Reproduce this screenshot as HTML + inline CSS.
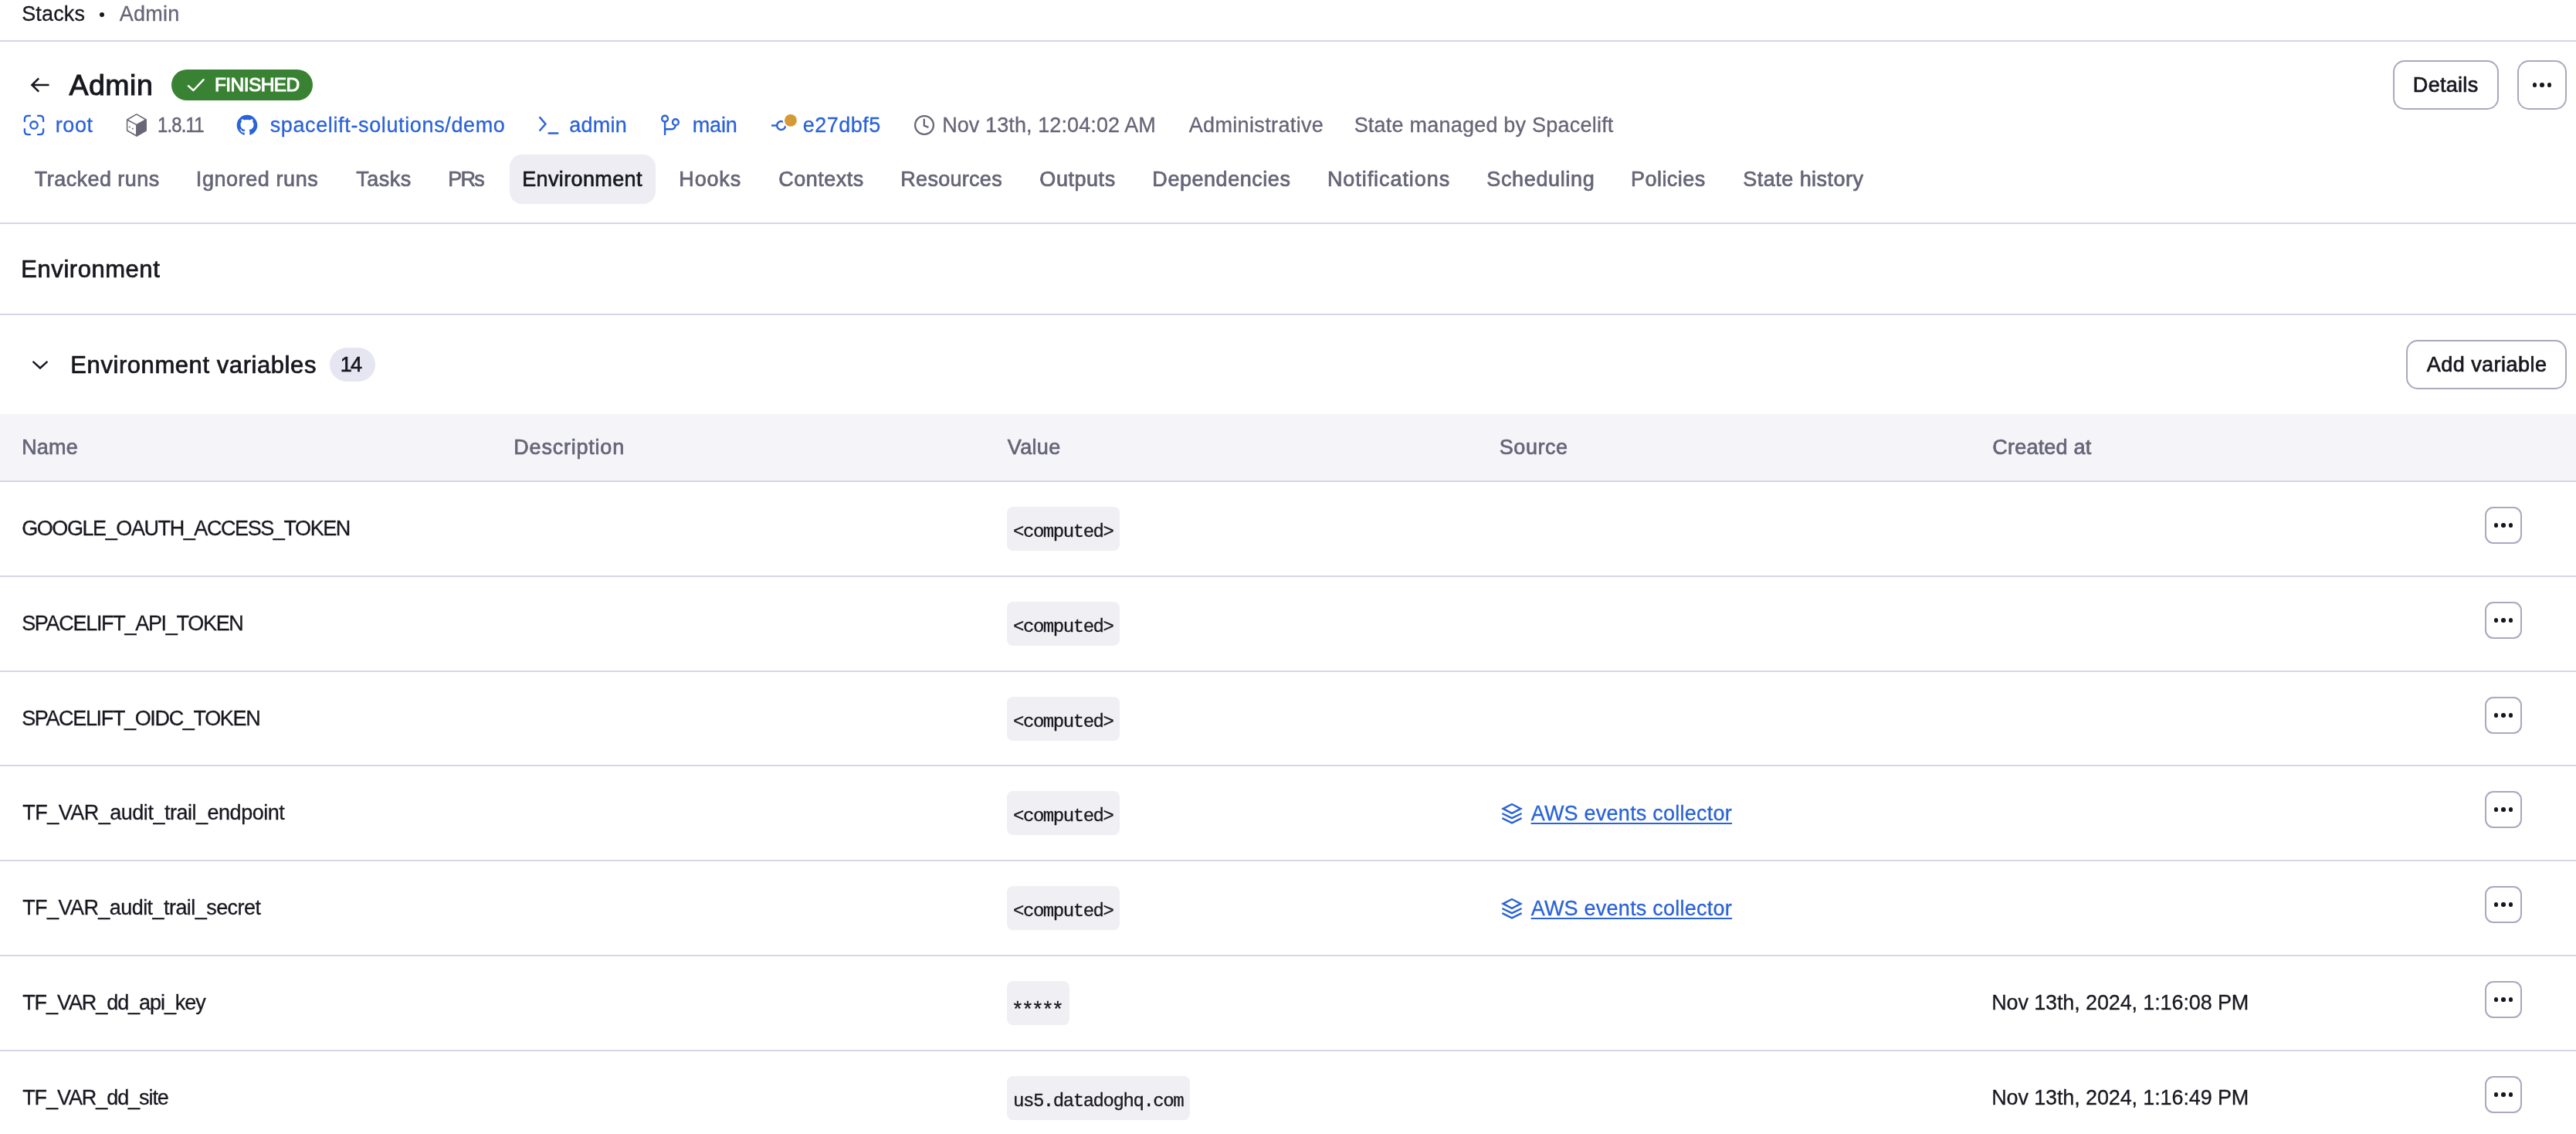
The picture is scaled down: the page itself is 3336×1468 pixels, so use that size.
<!DOCTYPE html><html lang="en"><head><meta charset="utf-8"><title>Admin · Environment</title>
<style>
*{box-sizing:border-box;margin:0;padding:0}
html,body{width:3336px;height:1468px;overflow:hidden;background:#fff}
body{position:relative;font-family:"Liberation Sans", sans-serif;color:#17171f;-webkit-font-smoothing:antialiased}
.t{position:absolute;white-space:nowrap;font-weight:400;font-style:normal;margin:0;display:block}
a.t{text-decoration:none;cursor:pointer}
.ico{position:absolute;overflow:visible;display:block}
.hr{position:absolute;left:0;width:3336px;height:2px;background:#d6d6e6}
#app{position:absolute;left:0;top:0;width:3336px;height:1468px;overflow:hidden;will-change:transform;background:#fff}
.badge{position:absolute;left:222px;top:90px;width:183px;height:40px;border-radius:20px;background:#3a8233}
.btn{position:absolute;border:2px solid #a9a9bf;background:#fff;border-radius:15px}
.btn.sm{border-radius:11px}
.d{position:absolute;border-radius:50%;background:#17171f;display:block}
.tab-active{position:absolute;left:660px;top:200px;width:189.4px;height:64px;border-radius:16px;background:#ededf3}
.count{position:absolute;left:426.75px;top:450px;width:59px;height:44px;border-radius:22px;background:#e6e6f2}
.thead{position:absolute;left:0;top:536px;width:3336px;height:86px;background:#f4f4f9}
.pill{position:absolute;left:1304px;height:57px;border-radius:8px;background:#f0f0f4;font-family:"Liberation Mono", monospace;font-size:24px;letter-spacing:-1.45px;line-height:66.1px;-webkit-text-stroke:0.3px #17171f;padding:0 0 0 8px;overflow:hidden;white-space:pre;color:#17171f}
.sep{position:absolute;left:128.7px;top:15.7px;width:6.6px;height:6.6px;border-radius:50%;background:#17171f}
</style></head><body><div id="app">
<nav class="crumbs"><a class="t crumb" style="left:28.15px;top:1.70px;font-size:27px;line-height:32px;letter-spacing:0.155px;color:#17171f;-webkit-text-stroke:0.3px #17171f;">Stacks</a><span class="sep"></span><span class="t crumb" style="left:154.85px;top:1.70px;font-size:27px;line-height:32px;letter-spacing:0.246px;color:#656577;-webkit-text-stroke:0.3px #656577;">Admin</span></nav>
<div class="hr" style="top:52px"></div>
<header>
<svg class="ico" style="left:36px;top:94px" width="32" height="32" viewBox="0 0 32 32" aria-hidden="true"><path d="M27.5 16H6 M14.2 7.3 L5.4 16 L14.2 24.7" fill="none" stroke="#17171f" stroke-width="2.5" stroke-linejoin="miter"/></svg><h1 class="t" style="left:89.50px;top:88.40px;font-size:37.5px;line-height:45px;letter-spacing:0.491px;color:#17171f;-webkit-text-stroke:1.0px #17171f;">Admin</h1>
<div class="badge"></div><svg class="ico" style="left:238px;top:94px" width="32" height="32" viewBox="0 0 32 32" aria-hidden="true"><path d="M5.9 17.2 L12.4 23 L25.6 9.2" fill="none" stroke="#fff" stroke-width="2.4" stroke-linecap="round" stroke-linejoin="round"/></svg><span class="t badge-t" style="left:278.00px;top:94.70px;font-size:24.5px;line-height:29px;letter-spacing:-0.593px;color:#ffffff;-webkit-text-stroke:1.0px #ffffff;">FINISHED</span>
<div class="btn" style="left:3099px;top:78px;width:137px;height:64px"></div><span class="t" style="left:3124.85px;top:94.00px;font-size:27px;line-height:32px;letter-spacing:0.295px;color:#17171f;-webkit-text-stroke:0.7px #17171f;">Details</span>
<div class="btn" style="left:3260px;top:78px;width:64px;height:64px"></div><i class="d" style="left:3279.55px;top:107.05px;width:5.5px;height:5.5px"></i><i class="d" style="left:3289.25px;top:107.05px;width:5.5px;height:5.5px"></i><i class="d" style="left:3298.95px;top:107.05px;width:5.5px;height:5.5px"></i>
<div class="meta"><svg class="ico" style="left:28px;top:146px" width="32" height="32" viewBox="0 0 32 32" aria-hidden="true"><path d="M3.9 10.9 V8.3 Q3.9 3.9 8.3 3.9 H10.9 M21.1 3.9 H23.700000000000003 Q28.1 3.9 28.1 8.3 V10.9 M28.1 21.1 V23.700000000000003 Q28.1 28.1 23.700000000000003 28.1 H21.1 M10.9 28.1 H8.3 Q3.9 28.1 3.9 23.700000000000003 V21.1" fill="none" stroke="#2a62d8" stroke-width="2.35" stroke-linecap="round"/><circle cx="16" cy="15.9" r="4.7" fill="none" stroke="#2a62d8" stroke-width="2.35"/></svg><a class="t" style="left:71.65px;top:145.60px;font-size:27px;line-height:32px;letter-spacing:0.642px;color:#2a62d8;-webkit-text-stroke:0.3px #2a62d8;">root</a><svg class="ico" style="left:161px;top:146px" width="32" height="32" viewBox="0 0 32 32" aria-hidden="true"><path d="M16.0 15.6 L28.2 9.0 L28.2 23.0 L16.0 30.0 Z" fill="#676778" stroke="#676778" stroke-width="1.5" stroke-linejoin="round"/><path d="M15.8 1.9 L28.2 9.0 L16.0 15.6 L3.6 9.0 Z M3.6 9.0 L3.6 23.0 L16.0 30.0 L16.0 15.6" fill="none" stroke="#676778" stroke-width="1.5" stroke-linejoin="round"/><path d="M6.0 18.0 L7.6 18.9 M10.0 20.2 L11.6 21.1" fill="none" stroke="#676778" stroke-width="1.5"/></svg><span class="t" style="left:203.96px;top:145.60px;font-size:27px;line-height:32px;letter-spacing:-0.900px;color:#656577;-webkit-text-stroke:0.5px #656577;transform:scaleX(0.8819);transform-origin:0 50%;">1.8.11</span><svg class="ico" style="left:303.9px;top:146px" width="32" height="32" viewBox="0 0 24 24" aria-hidden="true"><path d="M12.001 2C6.47598 2 2.00098 6.475 2.00098 12C2.00098 16.425 4.86348 20.1625 8.83848 21.4875C9.33848 21.575 9.52598 21.275 9.52598 21.0125C9.52598 20.775 9.51348 19.9875 9.51348 19.15C7.00098 19.6125 6.35098 18.5375 6.15098 17.975C6.03848 17.6875 5.55098 16.8 5.12598 16.5625C4.77598 16.375 4.27598 15.9125 5.11348 15.9C5.90098 15.8875 6.46348 16.625 6.65098 16.925C7.55098 18.4375 8.98848 18.0125 9.56348 17.75C9.65098 17.1 9.91348 16.6625 10.201 16.4125C7.97598 16.1625 5.65098 15.3 5.65098 11.475C5.65098 10.3875 6.03848 9.4875 6.67598 8.7875C6.57598 8.5375 6.22598 7.5125 6.77598 6.1375C6.77598 6.1375 7.61348 5.875 9.52598 7.1625C10.326 6.9375 11.176 6.825 12.026 6.825C12.876 6.825 13.726 6.9375 14.526 7.1625C16.4385 5.8625 17.276 6.1375 17.276 6.1375C17.826 7.5125 17.476 8.5375 17.376 8.7875C18.0135 9.4875 18.401 10.375 18.401 11.475C18.401 15.3125 16.0635 16.1625 13.8385 16.4125C14.201 16.725 14.5135 17.325 14.5135 18.2625C14.5135 19.6 14.501 20.675 14.501 21.0125C14.501 21.275 14.6885 21.5875 15.1885 21.4875C19.259 20.1133 21.9999 16.2963 22.001 12C22.001 6.475 17.526 2 12.001 2Z" fill="#2a62d8"/></svg><a class="t" style="left:349.65px;top:145.60px;font-size:27px;line-height:32px;letter-spacing:0.634px;color:#2a62d8;-webkit-text-stroke:0.3px #2a62d8;">spacelift-solutions/demo</a><svg class="ico" style="left:693.5px;top:146px" width="32" height="32" viewBox="0 0 32 32" aria-hidden="true"><path d="M4.6 5.4 L12.5 14.5 L4.6 23.5" fill="none" stroke="#2a62d8" stroke-width="2.4" stroke-linejoin="miter"/><path d="M16.7 26.5 H28.2" fill="none" stroke="#2a62d8" stroke-width="2.6" stroke-linecap="round"/></svg><a class="t" style="left:737.15px;top:145.60px;font-size:27px;line-height:32px;letter-spacing:0.295px;color:#2a62d8;-webkit-text-stroke:0.3px #2a62d8;">admin</a><svg class="ico" style="left:852px;top:146px" width="32" height="32" viewBox="0 0 32 32" aria-hidden="true"><circle cx="9.1" cy="7.6" r="3.9" fill="none" stroke="#2a62d8" stroke-width="2.4"/><circle cx="22.9" cy="12.2" r="3.9" fill="none" stroke="#2a62d8" stroke-width="2.4"/><path d="M9.1 11.5 V29.0 M9.1 21.3 H16.5 Q22.6 21.3 22.6 16.2" fill="none" stroke="#2a62d8" stroke-width="2.4"/></svg><a class="t" style="left:896.65px;top:145.60px;font-size:27px;line-height:32px;letter-spacing:-0.102px;color:#2a62d8;-webkit-text-stroke:0.3px #2a62d8;">main</a><svg class="ico" style="left:996px;top:146px" width="40" height="32" viewBox="0 0 40 32" aria-hidden="true"><path d="M3.0 16.5 H10.2" fill="none" stroke="#2a62d8" stroke-width="2.4"/><circle cx="15.7" cy="16.5" r="5.5" fill="none" stroke="#2a62d8" stroke-width="2.4"/><circle cx="27.9" cy="9.9" r="10.2" fill="#fff"/><circle cx="27.9" cy="9.9" r="7.9" fill="#d59a36"/></svg><a class="t" style="left:1039.65px;top:145.60px;font-size:27px;line-height:32px;letter-spacing:0.520px;color:#2a62d8;-webkit-text-stroke:0.3px #2a62d8;">e27dbf5</a><svg class="ico" style="left:1181px;top:146px" width="32" height="32" viewBox="0 0 32 32" aria-hidden="true"><circle cx="16" cy="16" r="11.9" fill="none" stroke="#676778" stroke-width="2.3"/><path d="M15.8 7.8 V16.6 L21.5 18.9" fill="none" stroke="#676778" stroke-width="2.3" stroke-linejoin="miter"/></svg><span class="t" style="left:1220.15px;top:145.60px;font-size:27px;line-height:32px;letter-spacing:0.101px;color:#656577;-webkit-text-stroke:0.3px #656577;">Nov 13th, 12:04:02 AM</span><span class="t" style="left:1539.65px;top:145.60px;font-size:27px;line-height:32px;letter-spacing:0.359px;color:#656577;-webkit-text-stroke:0.3px #656577;">Administrative</span><span class="t" style="left:1753.65px;top:145.60px;font-size:27px;line-height:32px;letter-spacing:0.220px;color:#656577;-webkit-text-stroke:0.3px #656577;">State managed by Spacelift</span></div>
<nav class="tabs"><div class="tab-active"></div><a class="t tab" style="left:44.85px;top:215.80px;font-size:27px;line-height:32px;letter-spacing:0.431px;color:#656577;-webkit-text-stroke:0.7px #656577;">Tracked runs</a><a class="t tab" style="left:253.85px;top:215.80px;font-size:27px;line-height:32px;letter-spacing:0.573px;color:#656577;-webkit-text-stroke:0.7px #656577;">Ignored runs</a><a class="t tab" style="left:461.35px;top:215.80px;font-size:27px;line-height:32px;letter-spacing:0.446px;color:#656577;-webkit-text-stroke:0.7px #656577;">Tasks</a><a class="t tab" style="left:580.35px;top:215.80px;font-size:27px;line-height:32px;letter-spacing:-1.854px;color:#656577;-webkit-text-stroke:0.7px #656577;">PRs</a><a class="t tab" style="left:676.15px;top:215.80px;font-size:27px;line-height:32px;letter-spacing:0.373px;color:#17171f;-webkit-text-stroke:0.7px #17171f;">Environment</a><a class="t tab" style="left:879.35px;top:215.80px;font-size:27px;line-height:32px;letter-spacing:0.817px;color:#656577;-webkit-text-stroke:0.7px #656577;">Hooks</a><a class="t tab" style="left:1008.35px;top:215.80px;font-size:27px;line-height:32px;letter-spacing:0.464px;color:#656577;-webkit-text-stroke:0.7px #656577;">Contexts</a><a class="t tab" style="left:1166.35px;top:215.80px;font-size:27px;line-height:32px;letter-spacing:0.281px;color:#656577;-webkit-text-stroke:0.7px #656577;">Resources</a><a class="t tab" style="left:1346.35px;top:215.80px;font-size:27px;line-height:32px;letter-spacing:0.541px;color:#656577;-webkit-text-stroke:0.7px #656577;">Outputs</a><a class="t tab" style="left:1492.35px;top:215.80px;font-size:27px;line-height:32px;letter-spacing:0.539px;color:#656577;-webkit-text-stroke:0.7px #656577;">Dependencies</a><a class="t tab" style="left:1718.95px;top:215.80px;font-size:27px;line-height:32px;letter-spacing:0.928px;color:#656577;-webkit-text-stroke:0.7px #656577;">Notifications</a><a class="t tab" style="left:1925.35px;top:215.80px;font-size:27px;line-height:32px;letter-spacing:0.635px;color:#656577;-webkit-text-stroke:0.7px #656577;">Scheduling</a><a class="t tab" style="left:2112.10px;top:215.80px;font-size:27px;line-height:32px;letter-spacing:0.430px;color:#656577;-webkit-text-stroke:0.7px #656577;">Policies</a><a class="t tab" style="left:2257.35px;top:215.80px;font-size:27px;line-height:32px;letter-spacing:0.457px;color:#656577;-webkit-text-stroke:0.7px #656577;">State history</a></nav>
</header>
<div class="hr" style="top:288px"></div>
<section class="page-title"><h2 class="t" style="left:27.35px;top:329.75px;font-size:31px;line-height:37px;letter-spacing:0.539px;color:#17171f;-webkit-text-stroke:0.7px #17171f;">Environment</h2></section>
<div class="hr" style="top:406px"></div>
<section class="envvars">
<svg class="ico" style="left:36px;top:457px" width="32" height="32" viewBox="0 0 32 32" aria-hidden="true"><path d="M6.55 10.85 L16 19.5 L25.45 10.85" fill="none" stroke="#17171f" stroke-width="2.4" stroke-linejoin="miter"/></svg><h3 class="t" style="left:91.35px;top:453.50px;font-size:31px;line-height:37px;letter-spacing:0.567px;color:#17171f;-webkit-text-stroke:0.7px #17171f;">Environment variables</h3><div class="count"></div><span class="t" style="left:440.85px;top:456.25px;font-size:27px;line-height:32px;letter-spacing:-1.966px;color:#17171f;-webkit-text-stroke:0.7px #17171f;">14</span>
<div class="btn" style="left:3116px;top:440px;width:208px;height:64px"></div><span class="t" style="left:3142.75px;top:456.20px;font-size:27px;line-height:32px;letter-spacing:0.466px;color:#17171f;-webkit-text-stroke:0.7px #17171f;">Add variable</span>
<div class="thead"></div><span class="t th" style="left:28.15px;top:562.50px;font-size:27px;line-height:32px;letter-spacing:0.165px;color:#656577;-webkit-text-stroke:0.7px #656577;">Name</span><span class="t th" style="left:665.35px;top:562.50px;font-size:27px;line-height:32px;letter-spacing:0.776px;color:#656577;-webkit-text-stroke:0.7px #656577;">Description</span><span class="t th" style="left:1304.85px;top:562.50px;font-size:27px;line-height:32px;letter-spacing:0.316px;color:#656577;-webkit-text-stroke:0.7px #656577;">Value</span><span class="t th" style="left:1941.85px;top:562.50px;font-size:27px;line-height:32px;letter-spacing:0.504px;color:#656577;-webkit-text-stroke:0.7px #656577;">Source</span><span class="t th" style="left:2580.35px;top:562.50px;font-size:27px;line-height:32px;letter-spacing:0.192px;color:#656577;-webkit-text-stroke:0.7px #656577;">Created at</span>
<div class="hr" style="top:622px"></div>
<div class="row">
<span class="t td-name" style="left:28.15px;top:668.00px;font-size:27px;line-height:32px;letter-spacing:-1.414px;color:#17171f;-webkit-text-stroke:0.3px #17171f;">GOOGLE_OAUTH_ACCESS_TOKEN</span>
<code class="pill" style="top:656.00px;width:146px">&lt;computed&gt;</code>
<div class="btn sm" style="left:3218px;top:656.00px;width:48px;height:48px"></div><i class="d" style="left:3229.85px;top:677.25px;width:5.5px;height:5.5px"></i><i class="d" style="left:3239.25px;top:677.25px;width:5.5px;height:5.5px"></i><i class="d" style="left:3248.65px;top:677.25px;width:5.5px;height:5.5px"></i>
</div>
<div class="row">
<div class="hr" style="top:745.00px"></div>
<span class="t td-name" style="left:28.15px;top:791.00px;font-size:27px;line-height:32px;letter-spacing:-1.300px;color:#17171f;-webkit-text-stroke:0.3px #17171f;">SPACELIFT_API_TOKEN</span>
<code class="pill" style="top:779.00px;width:146px">&lt;computed&gt;</code>
<div class="btn sm" style="left:3218px;top:779.00px;width:48px;height:48px"></div><i class="d" style="left:3229.85px;top:800.25px;width:5.5px;height:5.5px"></i><i class="d" style="left:3239.25px;top:800.25px;width:5.5px;height:5.5px"></i><i class="d" style="left:3248.65px;top:800.25px;width:5.5px;height:5.5px"></i>
</div>
<div class="row">
<div class="hr" style="top:868.00px"></div>
<span class="t td-name" style="left:28.15px;top:914.00px;font-size:27px;line-height:32px;letter-spacing:-1.347px;color:#17171f;-webkit-text-stroke:0.3px #17171f;">SPACELIFT_OIDC_TOKEN</span>
<code class="pill" style="top:902.00px;width:146px">&lt;computed&gt;</code>
<div class="btn sm" style="left:3218px;top:902.00px;width:48px;height:48px"></div><i class="d" style="left:3229.85px;top:923.25px;width:5.5px;height:5.5px"></i><i class="d" style="left:3239.25px;top:923.25px;width:5.5px;height:5.5px"></i><i class="d" style="left:3248.65px;top:923.25px;width:5.5px;height:5.5px"></i>
</div>
<div class="row">
<div class="hr" style="top:990.00px"></div>
<span class="t td-name" style="left:29.15px;top:1036.00px;font-size:27px;line-height:32px;letter-spacing:-0.485px;color:#17171f;-webkit-text-stroke:0.3px #17171f;">TF_VAR_audit_trail_endpoint</span>
<code class="pill" style="top:1024.00px;width:146px">&lt;computed&gt;</code>
<svg class="ico" style="left:1942px;top:1037px" width="32" height="32" viewBox="0 0 32 32" aria-hidden="true"><path d="M4.6 9.9 L16.0 4.0 L27.4 9.9 L16.0 15.8 Z" fill="none" stroke="#2a62d8" stroke-width="2.4" stroke-linejoin="miter"/><path d="M3.4 16.0 L16.0 22.2 L28.6 16.0 M3.4 22.2 L16.0 28.3 L28.6 22.2" fill="none" stroke="#2a62d8" stroke-width="2.4" stroke-linejoin="miter"/></svg>
<a class="t link" style="left:1982.65px;top:1037.00px;font-size:27px;line-height:32px;letter-spacing:0.242px;color:#2a62d8;-webkit-text-stroke:0.3px #2a62d8;text-decoration:underline;text-decoration-thickness:2px;text-underline-offset:2.5px;">AWS events collector</a>
<div class="btn sm" style="left:3218px;top:1024.00px;width:48px;height:48px"></div><i class="d" style="left:3229.85px;top:1045.25px;width:5.5px;height:5.5px"></i><i class="d" style="left:3239.25px;top:1045.25px;width:5.5px;height:5.5px"></i><i class="d" style="left:3248.65px;top:1045.25px;width:5.5px;height:5.5px"></i>
</div>
<div class="row">
<div class="hr" style="top:1113.00px"></div>
<span class="t td-name" style="left:29.15px;top:1159.00px;font-size:27px;line-height:32px;letter-spacing:-0.556px;color:#17171f;-webkit-text-stroke:0.3px #17171f;">TF_VAR_audit_trail_secret</span>
<code class="pill" style="top:1147.00px;width:146px">&lt;computed&gt;</code>
<svg class="ico" style="left:1942px;top:1160px" width="32" height="32" viewBox="0 0 32 32" aria-hidden="true"><path d="M4.6 9.9 L16.0 4.0 L27.4 9.9 L16.0 15.8 Z" fill="none" stroke="#2a62d8" stroke-width="2.4" stroke-linejoin="miter"/><path d="M3.4 16.0 L16.0 22.2 L28.6 16.0 M3.4 22.2 L16.0 28.3 L28.6 22.2" fill="none" stroke="#2a62d8" stroke-width="2.4" stroke-linejoin="miter"/></svg>
<a class="t link" style="left:1982.65px;top:1160.00px;font-size:27px;line-height:32px;letter-spacing:0.242px;color:#2a62d8;-webkit-text-stroke:0.3px #2a62d8;text-decoration:underline;text-decoration-thickness:2px;text-underline-offset:2.5px;">AWS events collector</a>
<div class="btn sm" style="left:3218px;top:1147.00px;width:48px;height:48px"></div><i class="d" style="left:3229.85px;top:1168.25px;width:5.5px;height:5.5px"></i><i class="d" style="left:3239.25px;top:1168.25px;width:5.5px;height:5.5px"></i><i class="d" style="left:3248.65px;top:1168.25px;width:5.5px;height:5.5px"></i>
</div>
<div class="row">
<div class="hr" style="top:1236.00px"></div>
<span class="t td-name" style="left:29.15px;top:1282.00px;font-size:27px;line-height:32px;letter-spacing:-1.065px;color:#17171f;-webkit-text-stroke:0.3px #17171f;">TF_VAR_dd_api_key</span>
<code class="pill" style="top:1270.00px;width:81px"><span style="position:relative;top:5.7px;left:-2.2px;font-size:27px;letter-spacing:-3.2px">*****</span></code>
<span class="t" style="left:2579.15px;top:1282.00px;font-size:27px;line-height:32px;letter-spacing:-0.121px;color:#17171f;-webkit-text-stroke:0.3px #17171f;">Nov 13th, 2024, 1:16:08 PM</span>
<div class="btn sm" style="left:3218px;top:1270.00px;width:48px;height:48px"></div><i class="d" style="left:3229.85px;top:1291.25px;width:5.5px;height:5.5px"></i><i class="d" style="left:3239.25px;top:1291.25px;width:5.5px;height:5.5px"></i><i class="d" style="left:3248.65px;top:1291.25px;width:5.5px;height:5.5px"></i>
</div>
<div class="row">
<div class="hr" style="top:1359.00px"></div>
<span class="t td-name" style="left:29.15px;top:1405.00px;font-size:27px;line-height:32px;letter-spacing:-1.068px;color:#17171f;-webkit-text-stroke:0.3px #17171f;">TF_VAR_dd_site</span>
<code class="pill" style="top:1393.00px;width:237px">us5.datadoghq.com</code>
<span class="t" style="left:2579.15px;top:1405.00px;font-size:27px;line-height:32px;letter-spacing:-0.121px;color:#17171f;-webkit-text-stroke:0.3px #17171f;">Nov 13th, 2024, 1:16:49 PM</span>
<div class="btn sm" style="left:3218px;top:1393.00px;width:48px;height:48px"></div><i class="d" style="left:3229.85px;top:1414.25px;width:5.5px;height:5.5px"></i><i class="d" style="left:3239.25px;top:1414.25px;width:5.5px;height:5.5px"></i><i class="d" style="left:3248.65px;top:1414.25px;width:5.5px;height:5.5px"></i>
</div>
</section>
</div></body></html>
